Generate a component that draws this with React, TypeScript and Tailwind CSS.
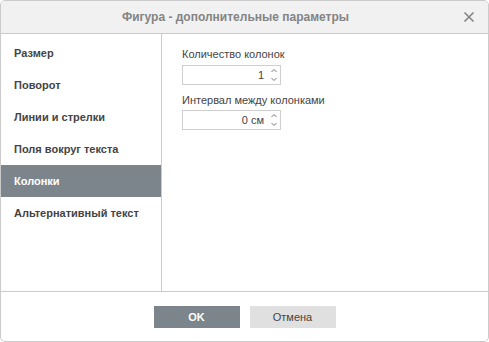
import { useState } from "react";

const items = [
  "Размер",
  "Поворот",
  "Линии и стрелки",
  "Поля вокруг текста",
  "Колонки",
  "Альтернативный текст",
];

function Spin({ value }: { value: string }) {
  return (
    <div className="relative w-[99px] h-[20px] border border-[#cfcfcf] bg-white flex items-center justify-end pr-[16px] text-[11px] text-[#444]">
      <span>{value}</span>
      <div className="absolute right-[2px] top-0 h-full flex flex-col justify-between py-[1px]">
        <svg width="8" height="7" viewBox="0 0 8 7">
          <path d="M1.5 5 L4 2.5 L6.5 5" fill="none" stroke="#777" strokeWidth="1" />
        </svg>
        <svg width="8" height="7" viewBox="0 0 8 7">
          <path d="M1.5 2 L4 4.5 L6.5 2" fill="none" stroke="#777" strokeWidth="1" />
        </svg>
      </div>
    </div>
  );
}

export default function App() {
  const [active, setActive] = useState(4);
  return (
    <div
      className="w-[489px] h-[342px] bg-white"
      style={{ fontFamily: '"Liberation Sans", Arial, sans-serif' }}
    >
      <div className="w-full h-full flex flex-col border border-[#cbcbcb] rounded-[5px] overflow-hidden">
        {/* header */}
        <div className="h-[33px] shrink-0 bg-[#f1f1f1] border-b border-[#cbcbcb] flex items-center justify-center pr-[18px] relative">
          <span className="text-[12px] font-bold text-[#848484]">Фигура - дополнительные параметры</span>
          <button className="absolute right-[13px] top-[10px]">
            <svg width="12" height="12" viewBox="0 0 12 12">
              <path d="M1.5 1.5 L10.5 10.5 M10.5 1.5 L1.5 10.5" stroke="#848484" strokeWidth="1.6" />
            </svg>
          </button>
        </div>

        {/* body */}
        <div className="flex-1 flex">
          <ul className="w-[161px] shrink-0 border-r border-[#cbcbcb] pt-[3px]">
            {items.map((item, i) => (
              <li
                key={i}
                onClick={() => setActive(i)}
                className={
                  i === active
                    ? "h-[32px] flex items-center pl-[13px] text-[11px] font-bold bg-[#7d858c] text-white cursor-pointer"
                    : "h-[32px] flex items-center pl-[13px] text-[11px] font-bold text-[#444] cursor-pointer"
                }
              >
                {item}
              </li>
            ))}
          </ul>
          <div className="flex-1 pl-[20px] pt-[13px] text-[11px] text-[#444]">
            <div className="leading-[14px]">Количество колонок</div>
            <div className="mt-[4px]">
              <Spin value="1" />
            </div>
            <div className="leading-[14px] mt-[8px]">Интервал между колонками</div>
            <div className="mt-[3px]">
              <Spin value="0 см" />
            </div>
          </div>
        </div>

        {/* footer */}
        <div className="h-[50px] shrink-0 border-t border-[#cbcbcb] flex justify-center gap-[10px] pt-[14px]">
          <button className="w-[86px] h-[22px] bg-[#7d858c] text-white text-[11px] font-bold">OK</button>
          <button className="w-[86px] h-[22px] bg-[#e0e0e0] text-[#444] text-[11px]">Отмена</button>
        </div>
      </div>
    </div>
  );
}
